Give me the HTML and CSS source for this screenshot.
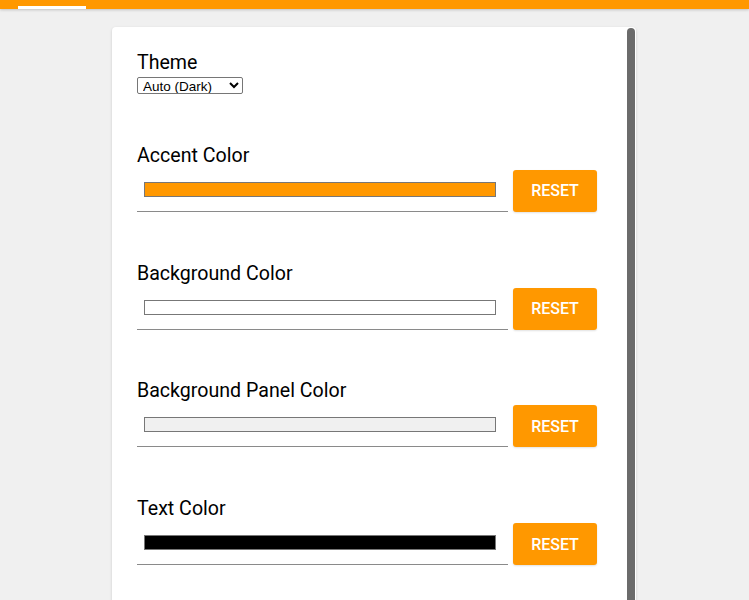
FILE: index.html
```html
<!DOCTYPE html>
<html>
<head>
<meta charset="utf-8">
<link rel="stylesheet" href="styles.css">
</head>
<body>
<header class="topbar"><span class="tab-indicator"></span></header>
<main class="card">
  <div class="section first">
    <label class="label" for="theme">Theme</label>
    <select id="theme" class="select"><option>Auto (Dark)</option></select>
  </div>
  <div class="section">
    <div class="label">Accent Color</div>
    <div class="row">
      <div class="field"><input class="swatch" type="color" value="#ff9800"></div>
      <button class="reset">RESET</button>
    </div>
  </div>
  <div class="section">
    <div class="label">Background Color</div>
    <div class="row">
      <div class="field"><input class="swatch" type="color" value="#ffffff"></div>
      <button class="reset">RESET</button>
    </div>
  </div>
  <div class="section">
    <div class="label">Background Panel Color</div>
    <div class="row">
      <div class="field"><input class="swatch" type="color" value="#f0f0f0"></div>
      <button class="reset">RESET</button>
    </div>
  </div>
  <div class="section">
    <div class="label">Text Color</div>
    <div class="row">
      <div class="field"><input class="swatch" type="color" value="#000000"></div>
      <button class="reset">RESET</button>
    </div>
  </div>
  <div class="scrollthumb"></div>
</main>
</body>
</html>
```
FILE: styles.css
```css
html, body {
  margin: 0;
  padding: 0;
  height: 100%;
  overflow: hidden;
}
body {
  background: #f0f0f0;
  font-family: Roboto, "Liberation Sans", sans-serif;
  color: #000;
}
.topbar {
  height: 9px;
  background: #ff9800;
  box-shadow: 0 1px 3px rgba(0,0,0,0.2);
  position: relative;
  display: flex;
  align-items: flex-end;
  padding-left: 18px;
}
.tab-indicator {
  display: block;
  width: 68px;
  height: 3px;
  background: #fff;
}
.card {
  position: relative;
  width: 524px;
  box-sizing: border-box;
  margin: 18px 0 0 112px;
  background: #fff;
  border-radius: 4px;
  box-shadow: 0 1px 3px rgba(0,0,0,0.15);
  padding: 23px 39px 60px 25px;
  min-height: 700px;
}
.section {
  display: flex;
  flex-direction: column;
  align-items: flex-start;
  margin-top: 48.8px;
}
.section.first {
  margin-top: 0;
}
.label {
  font-size: 19.6px;
  line-height: 26px;
  margin-bottom: -2px;
}
.select {
  margin-top: 3px;
  width: 106px;
  height: 17px;
  font-family: "Liberation Sans", Arial, sans-serif;
  font-size: 13.5px;
  padding: 0 0 0 1px;
  border: 1px solid #767676;
  border-radius: 2px;
  background: #fff;
  color: #000;
}
.row {
  margin-top: 3px;
  display: flex;
  gap: 5px;
  width: 460px;
}
.field {
  width: 371px;
  height: 42px;
  box-sizing: border-box;
  border-bottom: 1px solid #8a8a8a;
  padding: 12px 12px 0 7px;
}
.swatch {
  -webkit-appearance: none;
  appearance: none;
  display: block;
  width: 100%;
  height: 15px;
  border: 0;
  padding: 0;
  margin: 0;
  background: none;
}
.swatch::-webkit-color-swatch-wrapper {
  padding: 0;
}
.swatch::-webkit-color-swatch {
  border: 1px solid #777;
  border-radius: 0;
}
.reset {
  width: 84px;
  height: 42px;
  background: #ff9800;
  color: #fff;
  border: 0;
  border-radius: 3px;
  font-family: Roboto, "Liberation Sans", sans-serif;
  font-size: 16px;
  font-weight: 500;
  box-shadow: 0 1px 2px rgba(0,0,0,0.12);
  padding: 0;
}
.scrollthumb {
  position: absolute;
  top: 1px;
  right: 1px;
  width: 8px;
  height: 900px;
  background: #6b6b6b;
  border-radius: 4px 4px 0 0;
}
```
